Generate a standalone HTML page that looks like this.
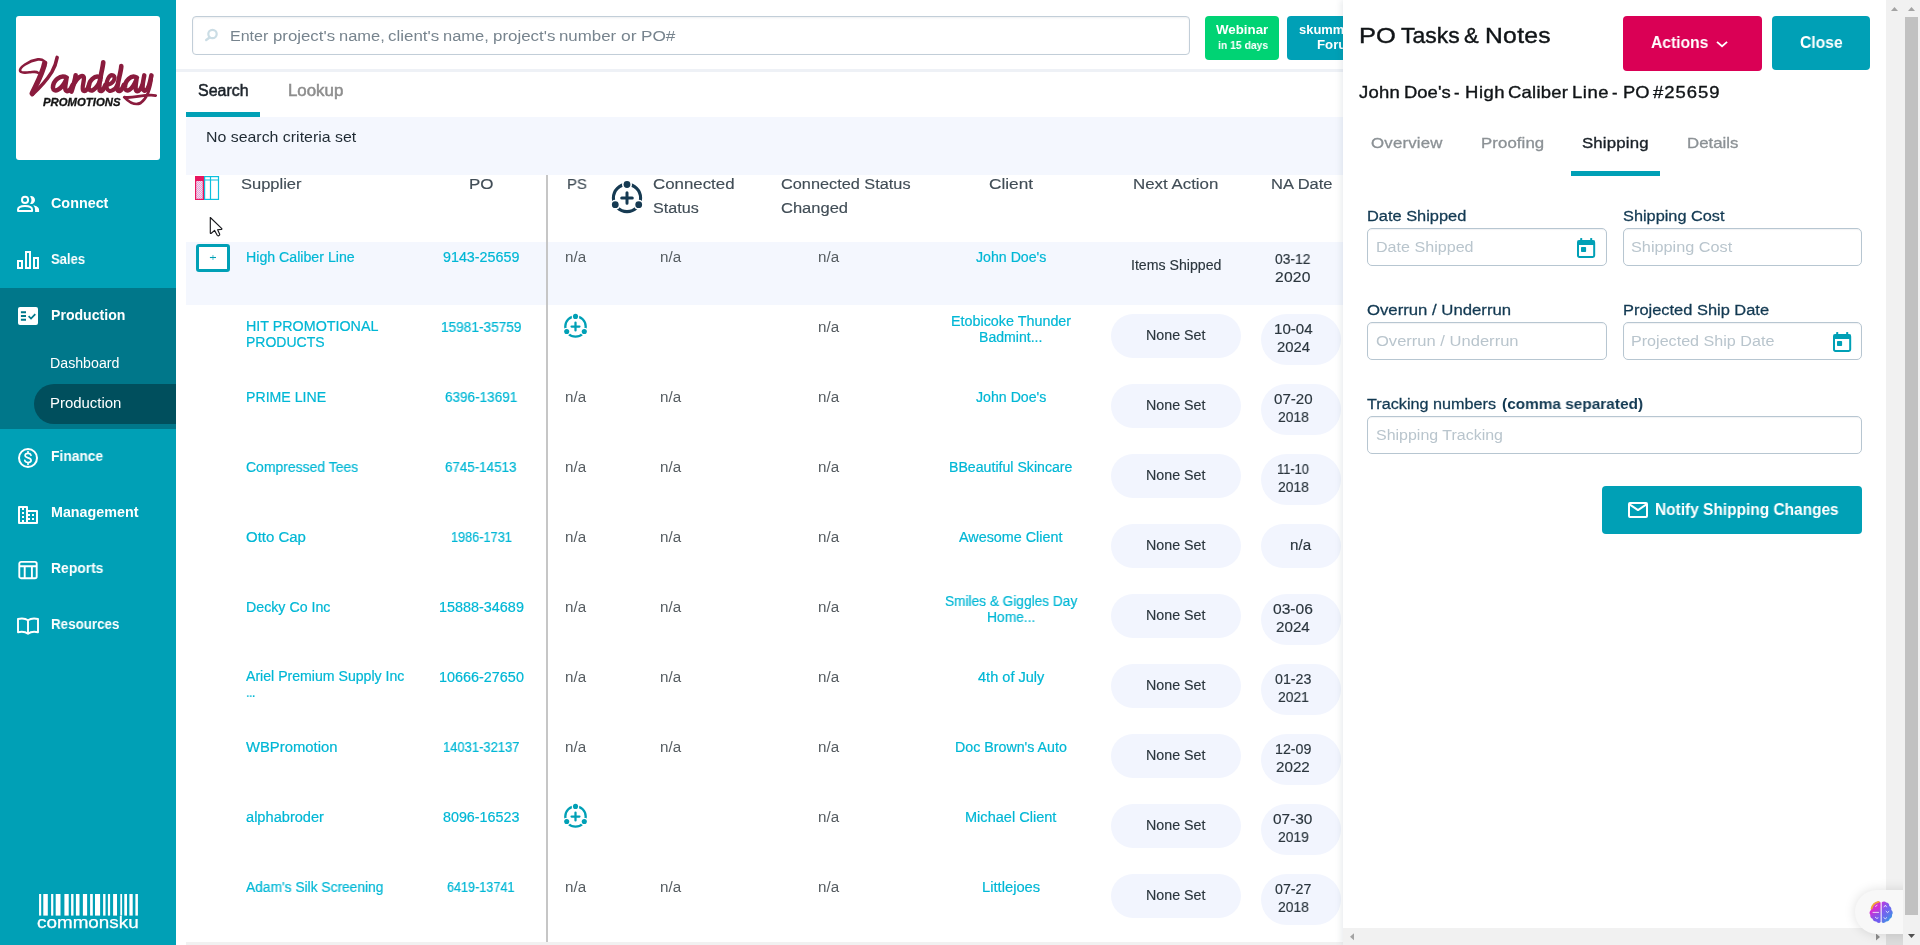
<!DOCTYPE html>
<html lang="en"><head><meta charset="utf-8"><title>PO Tasks &amp; Notes - commonsku</title>
<style>
html,body{margin:0;padding:0}
body{width:1920px;height:945px;overflow:hidden;position:relative;background:#fff;font-family:"Liberation Sans",sans-serif;color:#222}
.t{position:absolute;white-space:nowrap;display:block;z-index:1;will-change:transform}
.a{position:absolute;display:block}
svg{position:absolute;display:block;overflow:visible}
.inp{position:absolute;box-sizing:border-box;border:1px solid #b7c6d1;border-radius:5px;background:#fff;z-index:6;box-shadow:inset 0 1px 1px rgba(16,42,60,.06)}
.pill{position:absolute;background:#f2f5fe;z-index:0}

</style></head>
<body>
<div class="a" style="left:0;top:0;width:176px;height:945px;background:#00a0b6"></div>
<div class="a" style="left:16px;top:16px;width:144px;height:144px;background:#fff;border-radius:3px"></div>
<div class="a" style="left:0;top:288px;width:176px;height:141px;background:#00778a"></div>
<div class="a" style="left:34px;top:384px;width:142px;height:40px;border-radius:20px 0 0 20px;background:#004f5d"></div>
<svg style="left:14px;top:48px" width="148" height="68" viewBox="0 0 1920 882" fill="none" stroke="#8a1b3d" stroke-linecap="round" stroke-linejoin="round">
<path d="M312 322 C290 300 250 312 200 315 C150 318 100 330 80 300 C62 255 190 165 310 148 C380 142 415 175 402 240" stroke-width="34"/>
<path d="M398 195 C372 330 288 475 236 588" stroke-width="68"/>
<path d="M236 606 C300 548 420 425 492 310 C524 255 548 190 560 122" stroke-width="46"/>
<path d="M685 385 C600 335 505 430 505 515 C515 585 610 555 680 405 C670 470 645 555 690 560 C720 560 742 520 760 480" stroke-width="58"/>
<path d="M800 355 C790 430 765 500 745 565" stroke-width="60"/>
<path d="M775 470 C820 385 885 335 905 375 C920 420 870 515 900 555 C930 575 960 520 975 480" stroke-width="56"/>
<path d="M1125 385 C1050 335 965 430 970 515 C980 585 1060 555 1120 420" stroke-width="58"/>
<path d="M1158 185 C1148 300 1085 475 1112 550 C1140 580 1170 520 1185 480" stroke-width="60"/>
<path d="M1205 478 C1290 468 1328 385 1288 355 C1232 335 1185 440 1205 525 C1232 592 1318 540 1340 480" stroke-width="52"/>
<path d="M1392 235 C1388 330 1322 495 1347 550 C1377 580 1410 520 1425 480" stroke-width="60"/>
<path d="M1595 385 C1520 335 1435 430 1440 515 C1450 585 1530 555 1590 405 C1580 470 1562 555 1600 560 C1630 560 1650 520 1665 480" stroke-width="58"/>
<path d="M1690 355 C1680 420 1645 535 1692 555 C1740 555 1768 430 1782 355" stroke-width="58"/>
<path d="M1790 355 C1780 480 1740 640 1640 715 C1560 752 1475 688 1430 638 C1530 662 1700 592 1838 617" stroke-width="36"/>
</svg>
<svg style="left:12px;top:190px" width="32" height="28" viewBox="12 190 32 28">
<circle cx="25.04" cy="199.9" r="3.050" fill="none" stroke="#fff" stroke-width="1.950"/>
<path d="M18.020 210.920v-1.300c0-2.500 3.700-3.600 7.020-3.600s7.020 1.100 7.020 3.600v1.300z" fill="none" stroke="#fff" stroke-width="1.950" stroke-linejoin="round"/>
<path d="M30 196.130A4 4 0 1 1 30 203.870A6.320 6.320 0 0 0 30 196.130z" fill="#fff"/>
<path d="M33.200 205.300C36.600 205.900 39.100 207.600 39.100 210V211.900H35.100V210C35.100 208.100 34.400 206.500 33.200 205.300z" fill="#fff"/>
</svg>
<svg style="left:16px;top:250px" width="24" height="20" viewBox="16 250 24 20" stroke="#fff" fill="none" stroke-width="2">
<rect x="18" y="261" width="4" height="7"/>
<rect x="26" y="252" width="4" height="16"/>
<rect x="34" y="258" width="4" height="10"/>
</svg>
<svg style="left:18px;top:307px" width="20" height="18" viewBox="0 0 20 18">
<rect x="0" y="0" width="20" height="18" rx="2" fill="#fff"/>
<path d="M2.900 5.200h5.100M2.900 9h5.100M2.900 12.800h5.100" stroke="#00778a" stroke-width="1.900"/>
<path d="M10.6 9.2l2.4 2.3 4.3-4.4" stroke="#00778a" stroke-width="1.7" fill="none"/>
</svg>
<svg style="left:17px;top:447px" width="22" height="22" viewBox="0 0 22 22" stroke="#fff" fill="none">
<circle cx="11" cy="11" r="9" stroke-width="2"/>
<path d="M14 8.3c-.4-1.2-1.5-1.9-3-1.9-1.7 0-2.9.9-2.9 2.2 0 3 6 1.500 6 4.600 0 1.400-1.300 2.300-3.100 2.300-1.700 0-2.900-.800-3.200-2.100M11 4.600v1.800M11 15.500v1.900" stroke-width="1.7" stroke-linecap="round"/>
</svg>
<svg style="left:18px;top:506px" width="20" height="18" viewBox="0 0 20 18">
<path d="M1 0h8a1 1 0 0 1 1 1v3h9a1 1 0 0 1 1 1v12a1 1 0 0 1-1 1H1a1 1 0 0 1-1-1V1a1 1 0 0 1 1-1z" fill="#fff"/>
<rect x="2" y="2" width="6" height="14" fill="#00a0b6"/><rect x="10" y="6" width="8" height="10" fill="#00a0b6"/>
<path d="M4 2h2v2H4zM4 6h2v2H4zM4 10h2v2H4zM4 14h2v2H4zM10 8h2v2h-2zM10 12h2v2h-2zM14 8h2v2h-2zM14 12h2v2h-2z" fill="#fff"/>
</svg>
<svg style="left:18px;top:560px" width="20" height="20" viewBox="0 0 20 20" stroke="#fff" fill="none" stroke-width="1.9">
<rect x="1.300" y="1.900" width="17.400" height="16.300" rx="1.800"/>
<path d="M1.300 6.200h17.400M6.700 6.200v12M13.900 6.200v12"/>
</svg>
<svg style="left:16px;top:616px" width="24" height="20" viewBox="0 0 24 20" stroke="#fff" fill="none" stroke-width="1.9" stroke-linejoin="round" stroke-linecap="round">
<path d="M12 4.300C9.500 2.500 5.500 2.300 2 3v13.200c3.500-.700 7.500-.500 10 1.600 2.500-2.100 6.500-2.300 10-1.600V3c-3.500-.700-7.500-.500-10 1.300zM12 4.300v13.500"/>
</svg>
<svg style="left:0;top:0" width="176" height="945" viewBox="0 0 176 945" fill="#fff"><rect x="39.06" y="894" width="2.12" height="21.60"/><rect x="43.30" y="894" width="4.50" height="21.60"/><rect x="51.10" y="894" width="2.20" height="21.60"/><rect x="55.70" y="894" width="4.80" height="21.60"/><rect x="64.40" y="894" width="4.30" height="21.60"/><rect x="71.10" y="894" width="2.40" height="21.60"/><rect x="75.90" y="894" width="3.60" height="21.60"/><rect x="82.90" y="894" width="4.20" height="21.60"/><rect x="90.10" y="894" width="2.70" height="21.60"/><rect x="95.00" y="894" width="5.10" height="21.60"/><rect x="103.10" y="894" width="2.40" height="21.60"/><rect x="107.90" y="894" width="2.20" height="21.60"/><rect x="113.10" y="894" width="3.90" height="21.60"/><rect x="120.30" y="894" width="1.80" height="21.60"/><rect x="124.30" y="894" width="2.70" height="21.60"/><rect x="129.40" y="894" width="3.30" height="21.60"/><rect x="135.40" y="894" width="2.50" height="21.60"/></svg>
<div class="a" style="left:192px;top:16px;width:998px;height:39px;box-sizing:border-box;border:1px solid #c2ced8;border-radius:4px;background:#fff;box-shadow:inset 0 1px 2px rgba(20,40,60,.08)"></div>
<svg style="left:203px;top:27px" width="17" height="17" viewBox="203 27 17 17" fill="none" stroke="#cbdde5" stroke-linecap="round">
<circle cx="212.500" cy="34" r="4.200" stroke-width="2.200"/><path d="M209.600 37.600L206.200 40" stroke-width="2.400"/></svg>
<div class="a" style="left:1205px;top:16px;width:74px;height:44px;border-radius:4px;background:#00d374"></div>
<div class="a" style="left:1287px;top:16px;width:100px;height:44px;border-radius:4px;background:#00a0b6"></div>
<div class="a" style="left:176px;top:69px;width:1180px;height:3px;background:#eef1f6"></div>
<div class="a" style="left:186px;top:112px;width:74px;height:5px;background:#00a0b6"></div>
<div class="a" style="left:186px;top:117px;width:1170px;height:58px;background:#f4f7fe;border-radius:3px 0 0 0"></div>
<div class="a" style="left:186px;top:242px;width:1170px;height:63px;background:#f4f7fe"></div>
<div class="a" style="left:546px;top:175px;width:2px;height:767px;background:#c6c6c6"></div>
<div class="a" style="left:186px;top:942px;width:1160px;height:3px;background:#f1f1f1"></div>
<svg style="left:195px;top:176px" width="24.100" height="24" viewBox="0 0 24.100 24">
<defs><pattern id="hx" width="2" height="2" patternUnits="userSpaceOnUse"><rect width="2" height="2" fill="#fbe6dc"/><rect width="1" height="1" fill="#d896ec"/><rect x="1" y="1" width="1" height="1" fill="#e39be6"/></pattern></defs>
<rect x="0" y="0" width="9" height="24" fill="#e8155f"/><rect x="1.200" y="5" width="6.500" height="17.800" fill="url(#hx)"/>
<rect x="9.600" y="0.600" width="13.900" height="22.800" fill="#fff" stroke="#0cc0de" stroke-width="1.200"/>
<path d="M15.500 0.600v22.800M9.600 4h13.900" stroke="#0cc0de" stroke-width="1.200" fill="none"/>
</svg>
<div class="a" style="left:196px;top:244px;width:34px;height:28px;box-sizing:border-box;border:3px solid #00a0b6;border-radius:3px;background:#fff"></div>
<svg style="left:208px;top:253px" width="10" height="9" viewBox="208 253 10 9"><path d="M209.900 257.500H216" stroke="#00a0b6" stroke-width="1.100" fill="none"/><path d="M212.950 254.900V260" stroke="#00a0b6" stroke-width="1.100" fill="none" opacity=".6"/></svg>
<svg style="left:608.86px;top:179.80px" width="36.00" height="36.00" viewBox="-18 -18 36 36"><circle cx="0" cy="0" r="13.6" fill="none" stroke="#163a52" stroke-width="3.100"/><circle cx="0" cy="-13.5" r="5" fill="#fff"/><circle cx="0" cy="-13.5" r="3.400" fill="#163a52"/><circle cx="-11.72" cy="6.7" r="5" fill="#fff"/><circle cx="-11.72" cy="6.7" r="3.400" fill="#163a52"/><circle cx="11.72" cy="6.7" r="5" fill="#fff"/><circle cx="11.72" cy="6.7" r="3.400" fill="#163a52"/><path d="M0 -5.300V5.300M-5.300 0H5.300" stroke="#163a52" stroke-width="3" stroke-linecap="round" fill="none"/></svg>
<svg style="left:562.36px;top:313.00px" width="27.00" height="27.00" viewBox="-18 -18 36 36"><circle cx="0" cy="0" r="13.6" fill="none" stroke="#00a0b6" stroke-width="3.100"/><circle cx="0" cy="-13.5" r="5" fill="#fff"/><circle cx="0" cy="-13.5" r="3.400" fill="#00a0b6"/><circle cx="-11.72" cy="6.7" r="5" fill="#fff"/><circle cx="-11.72" cy="6.7" r="3.400" fill="#00a0b6"/><circle cx="11.72" cy="6.7" r="5" fill="#fff"/><circle cx="11.72" cy="6.7" r="3.400" fill="#00a0b6"/><path d="M0 -5.300V5.300M-5.300 0H5.300" stroke="#00a0b6" stroke-width="3" stroke-linecap="round" fill="none"/></svg>
<svg style="left:562.36px;top:803.00px" width="27.00" height="27.00" viewBox="-18 -18 36 36"><circle cx="0" cy="0" r="13.6" fill="none" stroke="#00a0b6" stroke-width="3.100"/><circle cx="0" cy="-13.5" r="5" fill="#fff"/><circle cx="0" cy="-13.5" r="3.400" fill="#00a0b6"/><circle cx="-11.72" cy="6.7" r="5" fill="#fff"/><circle cx="-11.72" cy="6.7" r="3.400" fill="#00a0b6"/><circle cx="11.72" cy="6.7" r="5" fill="#fff"/><circle cx="11.72" cy="6.7" r="3.400" fill="#00a0b6"/><path d="M0 -5.300V5.300M-5.300 0H5.300" stroke="#00a0b6" stroke-width="3" stroke-linecap="round" fill="none"/></svg>
<div class="pill" style="left:1111px;top:314px;width:130px;height:44px;border-radius:22px"></div>
<div class="pill" style="left:1261px;top:314px;width:80px;height:51px;border-radius:25.500px"></div>
<div class="pill" style="left:1111px;top:384px;width:130px;height:44px;border-radius:22px"></div>
<div class="pill" style="left:1261px;top:384px;width:80px;height:51px;border-radius:25.500px"></div>
<div class="pill" style="left:1111px;top:454px;width:130px;height:44px;border-radius:22px"></div>
<div class="pill" style="left:1261px;top:454px;width:80px;height:51px;border-radius:25.500px"></div>
<div class="pill" style="left:1111px;top:524px;width:130px;height:44px;border-radius:22px"></div>
<div class="pill" style="left:1261px;top:524px;width:80px;height:44px;border-radius:22px"></div>
<div class="pill" style="left:1111px;top:594px;width:130px;height:44px;border-radius:22px"></div>
<div class="pill" style="left:1261px;top:594px;width:80px;height:51px;border-radius:25.500px"></div>
<div class="pill" style="left:1111px;top:664px;width:130px;height:44px;border-radius:22px"></div>
<div class="pill" style="left:1261px;top:664px;width:80px;height:51px;border-radius:25.500px"></div>
<div class="pill" style="left:1111px;top:734px;width:130px;height:44px;border-radius:22px"></div>
<div class="pill" style="left:1261px;top:734px;width:80px;height:51px;border-radius:25.500px"></div>
<div class="pill" style="left:1111px;top:804px;width:130px;height:44px;border-radius:22px"></div>
<div class="pill" style="left:1261px;top:804px;width:80px;height:51px;border-radius:25.500px"></div>
<div class="pill" style="left:1111px;top:874px;width:130px;height:44px;border-radius:22px"></div>
<div class="pill" style="left:1261px;top:874px;width:80px;height:51px;border-radius:25.500px"></div>
<div class="a" style="left:1343px;top:0;width:577px;height:945px;background:#fff;box-shadow:-2px 0 6px rgba(40,70,90,.10);z-index:5"></div>
<div class="a" style="left:1623px;top:16px;width:139px;height:55px;border-radius:4px;background:#da0055;z-index:6"></div>
<div class="a" style="left:1772px;top:16px;width:98px;height:54px;border-radius:4px;background:#00a0b6;z-index:6"></div>
<svg style="left:1714px;top:38px;z-index:7" width="16" height="12" viewBox="0 0 16 12"><path d="M3 3.900l5.050 4.300 5.050-4.300" stroke="#fff" stroke-width="1.800" fill="none"/></svg>
<div class="a" style="left:1571px;top:171px;width:89px;height:5px;background:#00a0b6;z-index:6"></div>
<div class="inp" style="left:1367px;top:228px;width:240px;height:38px"></div>
<div class="inp" style="left:1623px;top:228px;width:239px;height:38px"></div>
<div class="inp" style="left:1367px;top:322px;width:240px;height:38px"></div>
<div class="inp" style="left:1623px;top:322px;width:239px;height:38px"></div>
<div class="inp" style="left:1367px;top:416px;width:495px;height:38px"></div>
<svg style="left:1577.05px;top:238px;z-index:7" width="18.200" height="20" viewBox="0 0 18.200 20">
<rect x="1" y="3" width="16.200" height="15.900" rx="1.400" fill="none" stroke="#00a0b6" stroke-width="2"/>
<rect x="0.600" y="2.600" width="17" height="4.400" fill="#00a0b6"/>
<rect x="3.200" y="0" width="2" height="4" rx=".6" fill="#00a0b6"/><rect x="13.200" y="0" width="2" height="4" rx=".6" fill="#00a0b6"/>
<rect x="4" y="9" width="5.100" height="5" rx=".8" fill="#00a0b6"/></svg>
<svg style="left:1833.2px;top:332px;z-index:7" width="18.200" height="20" viewBox="0 0 18.200 20">
<rect x="1" y="3" width="16.200" height="15.900" rx="1.400" fill="none" stroke="#00a0b6" stroke-width="2"/>
<rect x="0.600" y="2.600" width="17" height="4.400" fill="#00a0b6"/>
<rect x="3.200" y="0" width="2" height="4" rx=".6" fill="#00a0b6"/><rect x="13.200" y="0" width="2" height="4" rx=".6" fill="#00a0b6"/>
<rect x="4" y="9" width="5.100" height="5" rx=".8" fill="#00a0b6"/></svg>
<div class="a" style="left:1602px;top:486px;width:260px;height:48px;border-radius:4px;background:#00a0b6;z-index:6"></div>
<svg style="left:1628px;top:502px;z-index:7" width="20" height="16" viewBox="0 0 20 16" fill="none" stroke="#fff" stroke-width="2" stroke-linejoin="round"><rect x="1" y="1" width="18" height="14" rx="1"/><path d="M1.500 2.300L10 8.100 18.500 2.300"/></svg>
<div class="a" style="left:1343px;top:928px;width:543px;height:17px;background:#f1f1f1;z-index:8"></div>
<div class="a" style="left:1886px;top:0;width:17px;height:928px;background:#f1f1f1;z-index:8"></div>
<div class="a" style="left:1886px;top:928px;width:17px;height:17px;background:#dcdcdc;z-index:8"></div>
<svg style="left:0;top:0;z-index:9" width="1920" height="945" viewBox="0 0 1920 945"><path d="M1891 11l3.500-4 3.500 4z" fill="#a3a3a3"/><path d="M1354 933.300v7l-4-3.500z" fill="#a3a3a3"/><path d="M1876 933.500v7l4-3.500z" fill="#8c8c8c"/></svg>
<div class="a" style="left:1855px;top:890px;width:70px;height:44px;border-radius:22px 0 0 22px;background:#f8f8f8;box-shadow:0 0 12px rgba(0,0,0,.13);z-index:10"></div>
<svg style="left:1868.800px;top:900.500px;z-index:11" width="24.300" height="22.400" viewBox="0 0 24.300 22.400">
<defs><linearGradient id="bl" x1="0" y1="0" x2="0.350" y2="1"><stop offset="0" stop-color="#e02fc4"/><stop offset=".5" stop-color="#cf2fd6"/><stop offset=".8" stop-color="#8a52e6"/><stop offset="1" stop-color="#6f5cf0"/></linearGradient>
<linearGradient id="br" x1="0" y1="0" x2="0.600" y2="1"><stop offset="0" stop-color="#c238dc"/><stop offset=".4" stop-color="#7b5cf0"/><stop offset=".75" stop-color="#5b78ea"/><stop offset="1" stop-color="#2f9de4"/></linearGradient></defs>
<path d="M11.600 1.600C10.600 .200 8.200 .100 7 1.500 5.200 1.600 3.900 3.100 4 4.900 2.400 5.700 1.600 7.300 2 8.900 .400 10 .100 12.300 1.300 13.800 .900 15.600 1.900 17.300 3.600 17.800 3.900 19.700 5.600 20.900 7.400 20.500 8.400 22.200 10.700 22.500 11.600 21z" fill="url(#bl)"/>
<path d="M12.700 1.600C13.700 .200 16.100 .100 17.300 1.500 19.100 1.600 20.400 3.100 20.300 4.900 21.900 5.700 22.700 7.300 22.300 8.900 23.900 10 24.200 12.300 23 13.800 23.400 15.600 22.400 17.300 20.700 17.800 20.400 19.700 18.700 20.900 16.900 20.500 15.900 22.200 13.600 22.500 12.700 21z" fill="url(#br)"/>
<path d="M2.600 7.600C3.300 4.600 6 1.700 9.600 .900" stroke="#f0a63a" stroke-width="1.900" fill="none" stroke-linecap="round"/>
<path d="M3.600 11.400h6.400M6.200 5.600l2.200-1.500M6 16l1.800 1.400 1.600-.6M14.800 6.200l1.600-2 1.300 2M16.800 10l1.700 1.600 1.700-1.500M14.600 16.500l1.700 1.300 1.700-1.400" stroke="#fff" stroke-width=".9" fill="none" opacity=".85"/>
</svg>
<div class="a" style="left:1903px;top:0;width:17px;height:945px;background:#f1f1f1;z-index:12"></div>
<div class="a" style="left:1905px;top:17px;width:13px;height:898px;background:#c1c1c1;z-index:13"></div>
<svg style="left:0;top:0;z-index:13" width="1920" height="945" viewBox="0 0 1920 945"><path d="M1908 11l3.500-4 3.500 4z" fill="#a3a3a3"/><path d="M1908 934l3.500 4 3.500-4z" fill="#505050"/></svg>
<svg style="left:205px;top:213px;z-index:20" width="22" height="27" viewBox="205 213 22 27"><path d="M210.300 217.500L210.300 233Q210.400 233.900 211.300 233.300L214.600 230.400L217.200 235.300Q217.700 236.100 218.600 235.700L219.300 235.300Q220 234.800 219.600 233.900L217.600 229.800L221.300 229.400Q222.300 229.100 221.600 228.300Z" fill="#fff" stroke="#17181c" stroke-width="1.150" stroke-linejoin="round"/></svg>
<span class="t" id="t0" style="top:94.00px;font-size:11px;line-height:16px;color:#151515;font-weight:700;font-style:italic;-webkit-text-stroke:0.3px #151515;left:43.45px;transform:scaleX(1.0310);transform-origin:0 50%;">PROMOTIONS</span>
<span class="t" id="t1" style="top:193.00px;font-size:14px;line-height:20px;color:#fff;font-weight:700;left:51.30px;transform:scaleX(1.0250);transform-origin:0 50%;">Connect</span>
<span class="t" id="t2" style="top:249.00px;font-size:14px;line-height:20px;color:#fff;font-weight:700;left:51.30px;transform:scaleX(0.9319);transform-origin:0 50%;">Sales</span>
<span class="t" id="t3" style="top:305.00px;font-size:14px;line-height:20px;color:#fff;font-weight:700;left:51.30px;transform:scaleX(1.0069);transform-origin:0 50%;">Production</span>
<span class="t" id="t4" style="top:353.00px;font-size:14px;line-height:20px;color:#fff;left:50.10px;transform:scaleX(1.0131);transform-origin:0 50%;">Dashboard</span>
<span class="t" id="t5" style="top:393.00px;font-size:14px;line-height:20px;color:#fff;left:50.10px;transform:scaleX(1.0667);transform-origin:0 50%;">Production</span>
<span class="t" id="t6" style="top:446.00px;font-size:14px;line-height:20px;color:#fff;font-weight:700;left:51.30px;transform:scaleX(0.9867);transform-origin:0 50%;">Finance</span>
<span class="t" id="t7" style="top:502.00px;font-size:14px;line-height:20px;color:#fff;font-weight:700;left:51.30px;transform:scaleX(1.0213);transform-origin:0 50%;">Management</span>
<span class="t" id="t8" style="top:558.00px;font-size:14px;line-height:20px;color:#fff;font-weight:700;left:51.30px;transform:scaleX(0.9904);transform-origin:0 50%;">Reports</span>
<span class="t" id="t9" style="top:614.00px;font-size:14px;line-height:20px;color:#fff;font-weight:700;left:51.30px;transform:scaleX(0.9554);transform-origin:0 50%;">Resources</span>
<span class="t" id="t10" style="top:910.00px;font-size:17.2px;line-height:24px;color:#fff;-webkit-text-stroke:0.25px #fff;left:37.04px;transform:scaleX(1.0978);transform-origin:0 50%;">commonsku</span>
<span class="t" id="t11" style="top:25.00px;font-size:15.5px;line-height:21px;color:#77848e;left:229.72px;transform:scaleX(1.0347);transform-origin:0 50%;">Enter</span>
<span class="t" id="t12" style="top:25.00px;font-size:15.5px;line-height:21px;color:#77848e;left:272.73px;transform:scaleX(1.0841);transform-origin:0 50%;">project's</span>
<span class="t" id="t13" style="top:25.00px;font-size:15.5px;line-height:21px;color:#77848e;left:338.53px;transform:scaleX(1.0616);transform-origin:0 50%;">name,</span>
<span class="t" id="t14" style="top:25.00px;font-size:15.5px;line-height:21px;color:#77848e;left:388.03px;transform:scaleX(1.0926);transform-origin:0 50%;">client's</span>
<span class="t" id="t15" style="top:25.00px;font-size:15.5px;line-height:21px;color:#77848e;left:442.73px;transform:scaleX(1.0616);transform-origin:0 50%;">name,</span>
<span class="t" id="t16" style="top:25.00px;font-size:15.5px;line-height:21px;color:#77848e;left:492.53px;transform:scaleX(1.0911);transform-origin:0 50%;">project's</span>
<span class="t" id="t17" style="top:25.00px;font-size:15.5px;line-height:21px;color:#77848e;left:558.93px;transform:scaleX(1.0873);transform-origin:0 50%;">number</span>
<span class="t" id="t18" style="top:25.00px;font-size:15.5px;line-height:21px;color:#77848e;left:620.52px;transform:scaleX(1.1271);transform-origin:0 50%;">or</span>
<span class="t" id="t19" style="top:25.00px;font-size:15.5px;line-height:21px;color:#77848e;left:640.52px;transform:scaleX(1.1107);transform-origin:0 50%;">PO#</span>
<span class="t" id="t20" style="top:80.00px;font-size:16px;line-height:21px;color:#1a2128;-webkit-text-stroke:0.5px #1a2128;left:197.70px;transform:scaleX(0.9980);transform-origin:0 50%;">Search</span>
<span class="t" id="t21" style="top:80.00px;font-size:16px;line-height:21px;color:#8d8d8d;-webkit-text-stroke:0.5px #8d8d8d;left:287.70px;transform:scaleX(1.0533);transform-origin:0 50%;">Lookup</span>
<span class="t" id="t22" style="top:126.00px;font-size:15px;line-height:21px;color:#1f2a33;left:206.05px;transform:scaleX(1.0598);transform-origin:0 50%;">No search criteria set</span>
<span class="t" id="t23" style="top:21.00px;font-size:12.5px;line-height:18px;color:#fff;font-weight:700;left:1216.38px;transform:scaleX(1.0643);transform-origin:0 50%;">Webinar</span>
<span class="t" id="t24" style="top:37.00px;font-size:11.5px;line-height:16px;color:#fff;font-weight:700;left:1217.62px;transform:scaleX(0.9016);transform-origin:0 50%;">in 15 days</span>
<span class="t" id="t25" style="top:21.00px;font-size:12.5px;line-height:18px;color:#fff;font-weight:700;left:1299.08px;transform:scaleX(1.0354);transform-origin:0 50%;">skummunity</span>
<span class="t" id="t26" style="top:36.00px;font-size:12.5px;line-height:18px;color:#fff;font-weight:700;left:1316.58px;transform:scaleX(1.0607);transform-origin:0 50%;">Forum</span>
<span class="t" id="t27" style="top:173.00px;font-size:15.5px;line-height:21px;color:#414d56;-webkit-text-stroke:0.15px #414d56;left:240.72px;transform:scaleX(1.0646);transform-origin:0 50%;">Supplier</span>
<span class="t" id="t28" style="top:173.00px;font-size:15.5px;line-height:21px;color:#414d56;-webkit-text-stroke:0.15px #414d56;left:469.03px;transform:scaleX(1.0957);transform-origin:0 50%;">PO</span>
<span class="t" id="t29" style="top:173.00px;font-size:15.5px;line-height:21px;color:#414d56;-webkit-text-stroke:0.15px #414d56;left:566.52px;transform:scaleX(0.9644);transform-origin:0 50%;">PS</span>
<span class="t" id="t30" style="top:173.00px;font-size:15.5px;line-height:21px;color:#414d56;-webkit-text-stroke:0.15px #414d56;left:652.73px;transform:scaleX(1.0876);transform-origin:0 50%;">Connected</span>
<span class="t" id="t31" style="top:197.00px;font-size:15.5px;line-height:21px;color:#414d56;-webkit-text-stroke:0.15px #414d56;left:652.73px;transform:scaleX(1.0409);transform-origin:0 50%;">Status</span>
<span class="t" id="t32" style="top:173.00px;font-size:15.5px;line-height:21px;color:#414d56;-webkit-text-stroke:0.15px #414d56;left:780.93px;transform:scaleX(1.0512);transform-origin:0 50%;">Connected Status</span>
<span class="t" id="t33" style="top:197.00px;font-size:15.5px;line-height:21px;color:#414d56;-webkit-text-stroke:0.15px #414d56;left:780.93px;transform:scaleX(1.0656);transform-origin:0 50%;">Changed</span>
<span class="t" id="t34" style="top:173.00px;font-size:15.5px;line-height:21px;color:#414d56;-webkit-text-stroke:0.15px #414d56;left:989.23px;transform:scaleX(1.1112);transform-origin:0 50%;">Client</span>
<span class="t" id="t35" style="top:173.00px;font-size:15.5px;line-height:21px;color:#414d56;-webkit-text-stroke:0.15px #414d56;left:1133.42px;transform:scaleX(1.0886);transform-origin:0 50%;">Next Action</span>
<span class="t" id="t36" style="top:173.00px;font-size:15.5px;line-height:21px;color:#414d56;-webkit-text-stroke:0.15px #414d56;left:1270.52px;transform:scaleX(1.0661);transform-origin:0 50%;">NA Date</span>
<span class="t" id="t37" style="top:247.00px;font-size:14px;line-height:20px;color:#00b7d5;-webkit-text-stroke:0.2px #00b7d5;left:245.80px;transform:scaleX(1.0120);transform-origin:0 50%;">High Caliber Line</span>
<span class="t" id="t38" style="top:247.00px;font-size:14px;line-height:20px;color:#00b7d5;-webkit-text-stroke:0.2px #00b7d5;left:442.80px;transform:scaleX(1.0221);transform-origin:0 50%;">9143-25659</span>
<span class="t" id="t39" style="top:247.00px;font-size:14px;line-height:20px;color:#555c61;left:565.45px;transform:scaleX(1.0838);transform-origin:0 50%;">n/a</span>
<span class="t" id="t40" style="top:247.00px;font-size:14px;line-height:20px;color:#555c61;left:660.45px;transform:scaleX(1.0838);transform-origin:0 50%;">n/a</span>
<span class="t" id="t41" style="top:247.00px;font-size:14px;line-height:20px;color:#555c61;left:817.95px;transform:scaleX(1.0838);transform-origin:0 50%;">n/a</span>
<span class="t" id="t42" style="top:247.00px;font-size:14px;line-height:20px;color:#00b7d5;-webkit-text-stroke:0.2px #00b7d5;left:975.80px;transform:scaleX(1.0114);transform-origin:0 50%;">John Doe's</span>
<span class="t" id="t43" style="top:255.00px;font-size:14px;line-height:20px;color:#2b363e;-webkit-text-stroke:0.15px #2b363e;left:1130.80px;transform:scaleX(1.0101);transform-origin:0 50%;">Items Shipped</span>
<span class="t" id="t44" style="top:249.00px;font-size:14px;line-height:20px;color:#2b363e;-webkit-text-stroke:0.15px #2b363e;left:1275.30px;transform:scaleX(0.9885);transform-origin:0 50%;">03-12</span>
<span class="t" id="t45" style="top:267.00px;font-size:14px;line-height:20px;color:#2b363e;-webkit-text-stroke:0.15px #2b363e;letter-spacing:0.150px;left:1275.30px;transform:scaleX(1.1200);transform-origin:0 50%;">2020</span>
<span class="t" id="t46" style="top:316.00px;font-size:14px;line-height:20px;color:#00b7d5;-webkit-text-stroke:0.2px #00b7d5;left:245.80px;transform:scaleX(1.0212);transform-origin:0 50%;">HIT PROMOTIONAL</span>
<span class="t" id="t47" style="top:332.00px;font-size:14px;line-height:20px;color:#00b7d5;-webkit-text-stroke:0.2px #00b7d5;left:245.80px;transform:scaleX(0.9979);transform-origin:0 50%;">PRODUCTS</span>
<span class="t" id="t48" style="top:317.00px;font-size:14px;line-height:20px;color:#00b7d5;-webkit-text-stroke:0.2px #00b7d5;left:440.80px;transform:scaleX(0.9742);transform-origin:0 50%;">15981-35759</span>
<span class="t" id="t49" style="top:317.00px;font-size:14px;line-height:20px;color:#555c61;left:817.95px;transform:scaleX(1.0838);transform-origin:0 50%;">n/a</span>
<span class="t" id="t50" style="top:311.00px;font-size:14px;line-height:20px;color:#00b7d5;-webkit-text-stroke:0.2px #00b7d5;left:950.95px;transform:scaleX(1.0242);transform-origin:0 50%;">Etobicoke Thunder</span>
<span class="t" id="t51" style="top:327.00px;font-size:14px;line-height:20px;color:#00b7d5;-webkit-text-stroke:0.2px #00b7d5;left:979.30px;transform:scaleX(1.0059);transform-origin:0 50%;">Badmint...</span>
<span class="t" id="t52" style="top:325.00px;font-size:14px;line-height:20px;color:#2b363e;-webkit-text-stroke:0.15px #2b363e;left:1146.30px;transform:scaleX(1.0176);transform-origin:0 50%;">None Set</span>
<span class="t" id="t53" style="top:319.00px;font-size:14px;line-height:20px;color:#2b363e;-webkit-text-stroke:0.15px #2b363e;left:1273.70px;transform:scaleX(1.0778);transform-origin:0 50%;">10-04</span>
<span class="t" id="t54" style="top:337.00px;font-size:14px;line-height:20px;color:#2b363e;-webkit-text-stroke:0.15px #2b363e;left:1276.50px;transform:scaleX(1.0592);transform-origin:0 50%;">2024</span>
<span class="t" id="t55" style="top:387.00px;font-size:14px;line-height:20px;color:#00b7d5;-webkit-text-stroke:0.2px #00b7d5;left:245.80px;transform:scaleX(1.0093);transform-origin:0 50%;">PRIME LINE</span>
<span class="t" id="t56" style="top:387.00px;font-size:14px;line-height:20px;color:#00b7d5;-webkit-text-stroke:0.2px #00b7d5;left:444.90px;transform:scaleX(0.9659);transform-origin:0 50%;">6396-13691</span>
<span class="t" id="t57" style="top:387.00px;font-size:14px;line-height:20px;color:#555c61;left:565.45px;transform:scaleX(1.0838);transform-origin:0 50%;">n/a</span>
<span class="t" id="t58" style="top:387.00px;font-size:14px;line-height:20px;color:#555c61;left:660.45px;transform:scaleX(1.0838);transform-origin:0 50%;">n/a</span>
<span class="t" id="t59" style="top:387.00px;font-size:14px;line-height:20px;color:#555c61;left:817.95px;transform:scaleX(1.0838);transform-origin:0 50%;">n/a</span>
<span class="t" id="t60" style="top:387.00px;font-size:14px;line-height:20px;color:#00b7d5;-webkit-text-stroke:0.2px #00b7d5;left:975.80px;transform:scaleX(1.0114);transform-origin:0 50%;">John Doe's</span>
<span class="t" id="t61" style="top:395.00px;font-size:14px;line-height:20px;color:#2b363e;-webkit-text-stroke:0.15px #2b363e;left:1146.30px;transform:scaleX(1.0176);transform-origin:0 50%;">None Set</span>
<span class="t" id="t62" style="top:389.00px;font-size:14px;line-height:20px;color:#2b363e;-webkit-text-stroke:0.15px #2b363e;left:1273.70px;transform:scaleX(1.0778);transform-origin:0 50%;">07-20</span>
<span class="t" id="t63" style="top:407.00px;font-size:14px;line-height:20px;color:#2b363e;-webkit-text-stroke:0.15px #2b363e;left:1277.55px;transform:scaleX(0.9918);transform-origin:0 50%;">2018</span>
<span class="t" id="t64" style="top:457.00px;font-size:14px;line-height:20px;color:#00b7d5;-webkit-text-stroke:0.2px #00b7d5;left:245.80px;transform:scaleX(0.9966);transform-origin:0 50%;">Compressed Tees</span>
<span class="t" id="t65" style="top:457.00px;font-size:14px;line-height:20px;color:#00b7d5;-webkit-text-stroke:0.2px #00b7d5;left:445.30px;transform:scaleX(0.9552);transform-origin:0 50%;">6745-14513</span>
<span class="t" id="t66" style="top:457.00px;font-size:14px;line-height:20px;color:#555c61;left:565.45px;transform:scaleX(1.0838);transform-origin:0 50%;">n/a</span>
<span class="t" id="t67" style="top:457.00px;font-size:14px;line-height:20px;color:#555c61;left:660.45px;transform:scaleX(1.0838);transform-origin:0 50%;">n/a</span>
<span class="t" id="t68" style="top:457.00px;font-size:14px;line-height:20px;color:#555c61;left:817.95px;transform:scaleX(1.0838);transform-origin:0 50%;">n/a</span>
<span class="t" id="t69" style="top:457.00px;font-size:14px;line-height:20px;color:#00b7d5;-webkit-text-stroke:0.2px #00b7d5;left:949.30px;transform:scaleX(1.0099);transform-origin:0 50%;">BBeautiful Skincare</span>
<span class="t" id="t70" style="top:465.00px;font-size:14px;line-height:20px;color:#2b363e;-webkit-text-stroke:0.15px #2b363e;left:1146.30px;transform:scaleX(1.0176);transform-origin:0 50%;">None Set</span>
<span class="t" id="t71" style="top:459.00px;font-size:14px;line-height:20px;color:#2b363e;-webkit-text-stroke:0.15px #2b363e;left:1277.05px;transform:scaleX(0.9172);transform-origin:0 50%;">11-10</span>
<span class="t" id="t72" style="top:477.00px;font-size:14px;line-height:20px;color:#2b363e;-webkit-text-stroke:0.15px #2b363e;left:1277.55px;transform:scaleX(0.9918);transform-origin:0 50%;">2018</span>
<span class="t" id="t73" style="top:527.00px;font-size:14px;line-height:20px;color:#00b7d5;-webkit-text-stroke:0.2px #00b7d5;left:245.80px;transform:scaleX(1.0690);transform-origin:0 50%;">Otto Cap</span>
<span class="t" id="t74" style="top:527.00px;font-size:14px;line-height:20px;color:#00b7d5;-webkit-text-stroke:0.2px #00b7d5;left:450.60px;transform:scaleX(0.9081);transform-origin:0 50%;">1986-1731</span>
<span class="t" id="t75" style="top:527.00px;font-size:14px;line-height:20px;color:#555c61;left:565.45px;transform:scaleX(1.0838);transform-origin:0 50%;">n/a</span>
<span class="t" id="t76" style="top:527.00px;font-size:14px;line-height:20px;color:#555c61;left:660.45px;transform:scaleX(1.0838);transform-origin:0 50%;">n/a</span>
<span class="t" id="t77" style="top:527.00px;font-size:14px;line-height:20px;color:#555c61;left:817.95px;transform:scaleX(1.0838);transform-origin:0 50%;">n/a</span>
<span class="t" id="t78" style="top:527.00px;font-size:14px;line-height:20px;color:#00b7d5;-webkit-text-stroke:0.2px #00b7d5;left:959.30px;transform:scaleX(1.0247);transform-origin:0 50%;">Awesome Client</span>
<span class="t" id="t79" style="top:535.00px;font-size:14px;line-height:20px;color:#2b363e;-webkit-text-stroke:0.15px #2b363e;left:1146.30px;transform:scaleX(1.0176);transform-origin:0 50%;">None Set</span>
<span class="t" id="t80" style="top:535.00px;font-size:14px;line-height:20px;color:#2b363e;-webkit-text-stroke:0.15px #2b363e;left:1290.45px;transform:scaleX(1.0838);transform-origin:0 50%;">n/a</span>
<span class="t" id="t81" style="top:597.00px;font-size:14px;line-height:20px;color:#00b7d5;-webkit-text-stroke:0.2px #00b7d5;left:245.80px;transform:scaleX(1.0138);transform-origin:0 50%;">Decky Co Inc</span>
<span class="t" id="t82" style="top:597.00px;font-size:14px;line-height:20px;color:#00b7d5;-webkit-text-stroke:0.2px #00b7d5;left:438.55px;transform:scaleX(1.0287);transform-origin:0 50%;">15888-34689</span>
<span class="t" id="t83" style="top:597.00px;font-size:14px;line-height:20px;color:#555c61;left:565.45px;transform:scaleX(1.0838);transform-origin:0 50%;">n/a</span>
<span class="t" id="t84" style="top:597.00px;font-size:14px;line-height:20px;color:#555c61;left:660.45px;transform:scaleX(1.0838);transform-origin:0 50%;">n/a</span>
<span class="t" id="t85" style="top:597.00px;font-size:14px;line-height:20px;color:#555c61;left:817.95px;transform:scaleX(1.0838);transform-origin:0 50%;">n/a</span>
<span class="t" id="t86" style="top:591.00px;font-size:14px;line-height:20px;color:#00b7d5;-webkit-text-stroke:0.2px #00b7d5;left:944.90px;transform:scaleX(0.9764);transform-origin:0 50%;">Smiles &amp; Giggles Day</span>
<span class="t" id="t87" style="top:607.00px;font-size:14px;line-height:20px;color:#00b7d5;-webkit-text-stroke:0.2px #00b7d5;left:986.80px;transform:scaleX(0.9874);transform-origin:0 50%;">Home...</span>
<span class="t" id="t88" style="top:605.00px;font-size:14px;line-height:20px;color:#2b363e;-webkit-text-stroke:0.15px #2b363e;left:1146.30px;transform:scaleX(1.0176);transform-origin:0 50%;">None Set</span>
<span class="t" id="t89" style="top:599.00px;font-size:14px;line-height:20px;color:#2b363e;-webkit-text-stroke:0.15px #2b363e;left:1273.05px;transform:scaleX(1.1141);transform-origin:0 50%;">03-06</span>
<span class="t" id="t90" style="top:617.00px;font-size:14px;line-height:20px;color:#2b363e;-webkit-text-stroke:0.15px #2b363e;left:1276.10px;transform:scaleX(1.0849);transform-origin:0 50%;">2024</span>
<span class="t" id="t91" style="top:666.00px;font-size:14px;line-height:20px;color:#00b7d5;-webkit-text-stroke:0.2px #00b7d5;left:245.80px;transform:scaleX(1.0078);transform-origin:0 50%;">Ariel Premium Supply Inc</span>
<span class="t" id="t92" style="top:682.00px;font-size:14px;line-height:20px;color:#00b7d5;-webkit-text-stroke:0.2px #00b7d5;letter-spacing:-0.495px;left:245.80px;transform:scaleX(0.8800);transform-origin:0 50%;">...</span>
<span class="t" id="t93" style="top:667.00px;font-size:14px;line-height:20px;color:#00b7d5;-webkit-text-stroke:0.2px #00b7d5;left:438.55px;transform:scaleX(1.0287);transform-origin:0 50%;">10666-27650</span>
<span class="t" id="t94" style="top:667.00px;font-size:14px;line-height:20px;color:#555c61;left:565.45px;transform:scaleX(1.0838);transform-origin:0 50%;">n/a</span>
<span class="t" id="t95" style="top:667.00px;font-size:14px;line-height:20px;color:#555c61;left:660.45px;transform:scaleX(1.0838);transform-origin:0 50%;">n/a</span>
<span class="t" id="t96" style="top:667.00px;font-size:14px;line-height:20px;color:#555c61;left:817.95px;transform:scaleX(1.0838);transform-origin:0 50%;">n/a</span>
<span class="t" id="t97" style="top:667.00px;font-size:14px;line-height:20px;color:#00b7d5;-webkit-text-stroke:0.2px #00b7d5;left:977.80px;transform:scaleX(1.0403);transform-origin:0 50%;">4th of July</span>
<span class="t" id="t98" style="top:675.00px;font-size:14px;line-height:20px;color:#2b363e;-webkit-text-stroke:0.15px #2b363e;left:1146.30px;transform:scaleX(1.0176);transform-origin:0 50%;">None Set</span>
<span class="t" id="t99" style="top:669.00px;font-size:14px;line-height:20px;color:#2b363e;-webkit-text-stroke:0.15px #2b363e;left:1274.80px;transform:scaleX(1.0164);transform-origin:0 50%;">01-23</span>
<span class="t" id="t100" style="top:687.00px;font-size:14px;line-height:20px;color:#2b363e;-webkit-text-stroke:0.15px #2b363e;left:1277.55px;transform:scaleX(0.9918);transform-origin:0 50%;">2021</span>
<span class="t" id="t101" style="top:737.00px;font-size:14px;line-height:20px;color:#00b7d5;-webkit-text-stroke:0.2px #00b7d5;left:245.80px;transform:scaleX(1.0584);transform-origin:0 50%;">WBPromotion</span>
<span class="t" id="t102" style="top:737.00px;font-size:14px;line-height:20px;color:#00b7d5;-webkit-text-stroke:0.2px #00b7d5;left:442.80px;transform:scaleX(0.9257);transform-origin:0 50%;">14031-32137</span>
<span class="t" id="t103" style="top:737.00px;font-size:14px;line-height:20px;color:#555c61;left:565.45px;transform:scaleX(1.0838);transform-origin:0 50%;">n/a</span>
<span class="t" id="t104" style="top:737.00px;font-size:14px;line-height:20px;color:#555c61;left:660.45px;transform:scaleX(1.0838);transform-origin:0 50%;">n/a</span>
<span class="t" id="t105" style="top:737.00px;font-size:14px;line-height:20px;color:#555c61;left:817.95px;transform:scaleX(1.0838);transform-origin:0 50%;">n/a</span>
<span class="t" id="t106" style="top:737.00px;font-size:14px;line-height:20px;color:#00b7d5;-webkit-text-stroke:0.2px #00b7d5;left:955.05px;transform:scaleX(1.0167);transform-origin:0 50%;">Doc Brown's Auto</span>
<span class="t" id="t107" style="top:745.00px;font-size:14px;line-height:20px;color:#2b363e;-webkit-text-stroke:0.15px #2b363e;left:1146.30px;transform:scaleX(1.0176);transform-origin:0 50%;">None Set</span>
<span class="t" id="t108" style="top:739.00px;font-size:14px;line-height:20px;color:#2b363e;-webkit-text-stroke:0.15px #2b363e;left:1274.80px;transform:scaleX(1.0164);transform-origin:0 50%;">12-09</span>
<span class="t" id="t109" style="top:757.00px;font-size:14px;line-height:20px;color:#2b363e;-webkit-text-stroke:0.15px #2b363e;left:1276.10px;transform:scaleX(1.0849);transform-origin:0 50%;">2022</span>
<span class="t" id="t110" style="top:807.00px;font-size:14px;line-height:20px;color:#00b7d5;-webkit-text-stroke:0.2px #00b7d5;left:245.80px;transform:scaleX(1.0437);transform-origin:0 50%;">alphabroder</span>
<span class="t" id="t111" style="top:807.00px;font-size:14px;line-height:20px;color:#00b7d5;-webkit-text-stroke:0.2px #00b7d5;left:442.80px;transform:scaleX(1.0221);transform-origin:0 50%;">8096-16523</span>
<span class="t" id="t112" style="top:807.00px;font-size:14px;line-height:20px;color:#555c61;left:817.95px;transform:scaleX(1.0838);transform-origin:0 50%;">n/a</span>
<span class="t" id="t113" style="top:807.00px;font-size:14px;line-height:20px;color:#00b7d5;-webkit-text-stroke:0.2px #00b7d5;left:965.30px;transform:scaleX(1.0394);transform-origin:0 50%;">Michael Client</span>
<span class="t" id="t114" style="top:815.00px;font-size:14px;line-height:20px;color:#2b363e;-webkit-text-stroke:0.15px #2b363e;left:1146.30px;transform:scaleX(1.0176);transform-origin:0 50%;">None Set</span>
<span class="t" id="t115" style="top:809.00px;font-size:14px;line-height:20px;color:#2b363e;-webkit-text-stroke:0.15px #2b363e;left:1273.30px;transform:scaleX(1.1002);transform-origin:0 50%;">07-30</span>
<span class="t" id="t116" style="top:827.00px;font-size:14px;line-height:20px;color:#2b363e;-webkit-text-stroke:0.15px #2b363e;left:1277.55px;transform:scaleX(0.9918);transform-origin:0 50%;">2019</span>
<span class="t" id="t117" style="top:877.00px;font-size:14px;line-height:20px;color:#00b7d5;-webkit-text-stroke:0.2px #00b7d5;left:245.80px;transform:scaleX(0.9841);transform-origin:0 50%;">Adam's Silk Screening</span>
<span class="t" id="t118" style="top:877.00px;font-size:14px;line-height:20px;color:#00b7d5;-webkit-text-stroke:0.2px #00b7d5;left:447.30px;transform:scaleX(0.9017);transform-origin:0 50%;">6419-13741</span>
<span class="t" id="t119" style="top:877.00px;font-size:14px;line-height:20px;color:#555c61;left:565.45px;transform:scaleX(1.0838);transform-origin:0 50%;">n/a</span>
<span class="t" id="t120" style="top:877.00px;font-size:14px;line-height:20px;color:#555c61;left:660.45px;transform:scaleX(1.0838);transform-origin:0 50%;">n/a</span>
<span class="t" id="t121" style="top:877.00px;font-size:14px;line-height:20px;color:#555c61;left:817.95px;transform:scaleX(1.0838);transform-origin:0 50%;">n/a</span>
<span class="t" id="t122" style="top:877.00px;font-size:14px;line-height:20px;color:#00b7d5;-webkit-text-stroke:0.2px #00b7d5;left:981.90px;transform:scaleX(1.0531);transform-origin:0 50%;">Littlejoes</span>
<span class="t" id="t123" style="top:885.00px;font-size:14px;line-height:20px;color:#2b363e;-webkit-text-stroke:0.15px #2b363e;left:1146.30px;transform:scaleX(1.0176);transform-origin:0 50%;">None Set</span>
<span class="t" id="t124" style="top:879.00px;font-size:14px;line-height:20px;color:#2b363e;-webkit-text-stroke:0.15px #2b363e;left:1274.80px;transform:scaleX(1.0164);transform-origin:0 50%;">07-27</span>
<span class="t" id="t125" style="top:897.00px;font-size:14px;line-height:20px;color:#2b363e;-webkit-text-stroke:0.15px #2b363e;left:1277.55px;transform:scaleX(0.9918);transform-origin:0 50%;">2018</span>
<span class="t" id="t126" style="top:21.00px;font-size:22px;line-height:29px;color:#101417;-webkit-text-stroke:0.4px #101417;left:1358.70px;z-index:7;transform:scaleX(1.1573);transform-origin:0 50%;">PO</span>
<span class="t" id="t127" style="top:21.00px;font-size:22px;line-height:29px;color:#101417;-webkit-text-stroke:0.4px #101417;left:1400.90px;z-index:7;transform:scaleX(1.0418);transform-origin:0 50%;">Tasks</span>
<span class="t" id="t128" style="top:21.00px;font-size:22px;line-height:29px;color:#101417;-webkit-text-stroke:0.4px #101417;left:1463.70px;z-index:7;">&amp;</span>
<span class="t" id="t129" style="top:21.00px;font-size:22px;line-height:29px;color:#101417;-webkit-text-stroke:0.4px #101417;letter-spacing:0.294px;left:1485.40px;z-index:7;transform:scaleX(1.1200);transform-origin:0 50%;">Notes</span>
<span class="t" id="t130" style="top:81.00px;font-size:16.5px;line-height:22px;color:#101417;-webkit-text-stroke:0.35px #101417;letter-spacing:0.201px;left:1358.97px;z-index:7;transform:scaleX(1.1200);transform-origin:0 50%;">John</span>
<span class="t" id="t131" style="top:81.00px;font-size:16.5px;line-height:22px;color:#101417;-webkit-text-stroke:0.35px #101417;left:1403.58px;z-index:7;transform:scaleX(1.1195);transform-origin:0 50%;">Doe's</span>
<span class="t" id="t132" style="top:81.00px;font-size:16.5px;line-height:22px;color:#101417;-webkit-text-stroke:0.35px #101417;left:1453.97px;z-index:7;">-</span>
<span class="t" id="t133" style="top:81.00px;font-size:16.5px;line-height:22px;color:#101417;-webkit-text-stroke:0.35px #101417;letter-spacing:0.488px;left:1465.17px;z-index:7;transform:scaleX(1.1200);transform-origin:0 50%;">High</span>
<span class="t" id="t134" style="top:81.00px;font-size:16.5px;line-height:22px;color:#101417;-webkit-text-stroke:0.35px #101417;letter-spacing:0.208px;left:1508.38px;z-index:7;transform:scaleX(1.1200);transform-origin:0 50%;">Caliber</span>
<span class="t" id="t135" style="top:81.00px;font-size:16.5px;line-height:22px;color:#101417;-webkit-text-stroke:0.35px #101417;letter-spacing:0.447px;left:1571.77px;z-index:7;transform:scaleX(1.1200);transform-origin:0 50%;">Line</span>
<span class="t" id="t136" style="top:81.00px;font-size:16.5px;line-height:22px;color:#101417;-webkit-text-stroke:0.35px #101417;left:1611.97px;z-index:7;">-</span>
<span class="t" id="t137" style="top:81.00px;font-size:16.5px;line-height:22px;color:#101417;-webkit-text-stroke:0.35px #101417;left:1623.17px;z-index:7;transform:scaleX(1.1093);transform-origin:0 50%;">PO</span>
<span class="t" id="t138" style="top:81.00px;font-size:16.5px;line-height:22px;color:#101417;-webkit-text-stroke:0.35px #101417;letter-spacing:0.889px;left:1653.38px;z-index:7;transform:scaleX(1.1200);transform-origin:0 50%;">#25659</span>
<span class="t" id="t139" style="top:132.00px;font-size:15px;line-height:21px;color:#8b9195;-webkit-text-stroke:0.3px #8b9195;letter-spacing:0.189px;left:1370.95px;z-index:7;transform:scaleX(1.1200);transform-origin:0 50%;">Overview</span>
<span class="t" id="t140" style="top:132.00px;font-size:15px;line-height:21px;color:#8b9195;-webkit-text-stroke:0.3px #8b9195;letter-spacing:0.079px;left:1480.55px;z-index:7;transform:scaleX(1.1200);transform-origin:0 50%;">Proofing</span>
<span class="t" id="t141" style="top:132.00px;font-size:15px;line-height:21px;color:#1a2128;-webkit-text-stroke:0.35px #1a2128;letter-spacing:0.141px;left:1581.95px;z-index:7;transform:scaleX(1.1200);transform-origin:0 50%;">Shipping</span>
<span class="t" id="t142" style="top:132.00px;font-size:15px;line-height:21px;color:#8b9195;-webkit-text-stroke:0.3px #8b9195;letter-spacing:0.020px;left:1687.05px;z-index:7;transform:scaleX(1.1200);transform-origin:0 50%;">Details</span>
<span class="t" id="t143" style="top:32.00px;font-size:16px;line-height:21px;color:#fff;font-weight:700;left:1650.50px;z-index:7;transform:scaleX(0.9766);transform-origin:0 50%;">Actions</span>
<span class="t" id="t144" style="top:32.00px;font-size:16px;line-height:21px;color:#fff;font-weight:700;left:1800.00px;z-index:7;transform:scaleX(0.9776);transform-origin:0 50%;">Close</span>
<span class="t" id="t145" style="top:205.00px;font-size:15.5px;line-height:21px;color:#123952;-webkit-text-stroke:0.28px #123952;left:1367.22px;z-index:7;transform:scaleX(1.0576);transform-origin:0 50%;">Date Shipped</span>
<span class="t" id="t146" style="top:205.00px;font-size:15.5px;line-height:21px;color:#123952;-webkit-text-stroke:0.28px #123952;left:1622.52px;z-index:7;transform:scaleX(1.0522);transform-origin:0 50%;">Shipping Cost</span>
<span class="t" id="t147" style="top:299.00px;font-size:15.5px;line-height:21px;color:#123952;-webkit-text-stroke:0.28px #123952;left:1367.22px;z-index:7;transform:scaleX(1.0788);transform-origin:0 50%;">Overrun / Underrun</span>
<span class="t" id="t148" style="top:299.00px;font-size:15.5px;line-height:21px;color:#123952;-webkit-text-stroke:0.28px #123952;left:1622.52px;z-index:7;transform:scaleX(1.0594);transform-origin:0 50%;">Projected Ship Date</span>
<span class="t" id="t149" style="top:393.00px;font-size:15.5px;line-height:21px;color:#123952;-webkit-text-stroke:0.28px #123952;left:1367.22px;z-index:7;transform:scaleX(1.0451);transform-origin:0 50%;">Tracking numbers</span>
<span class="t" id="t150" style="top:393.00px;font-size:15.5px;line-height:21px;color:#123952;font-weight:700;left:1501.92px;z-index:7;transform:scaleX(0.9923);transform-origin:0 50%;">(comma separated)</span>
<span class="t" id="t151" style="top:236.00px;font-size:15.5px;line-height:21px;color:#b9c5cd;left:1376.02px;z-index:7;transform:scaleX(1.0385);transform-origin:0 50%;">Date Shipped</span>
<span class="t" id="t152" style="top:236.00px;font-size:15.5px;line-height:21px;color:#b9c5cd;left:1631.22px;z-index:7;transform:scaleX(1.0491);transform-origin:0 50%;">Shipping Cost</span>
<span class="t" id="t153" style="top:330.00px;font-size:15.5px;line-height:21px;color:#b9c5cd;left:1376.02px;z-index:7;transform:scaleX(1.0675);transform-origin:0 50%;">Overrun / Underrun</span>
<span class="t" id="t154" style="top:330.00px;font-size:15.5px;line-height:21px;color:#b9c5cd;left:1631.22px;z-index:7;transform:scaleX(1.0398);transform-origin:0 50%;">Projected Ship Date</span>
<span class="t" id="t155" style="top:424.00px;font-size:15.5px;line-height:21px;color:#b9c5cd;left:1376.02px;z-index:7;transform:scaleX(1.0303);transform-origin:0 50%;">Shipping Tracking</span>
<span class="t" id="t156" style="top:499.00px;font-size:16px;line-height:21px;color:#fff;font-weight:700;left:1655.00px;z-index:7;transform:scaleX(0.9652);transform-origin:0 50%;">Notify Shipping Changes</span>

</body></html>
